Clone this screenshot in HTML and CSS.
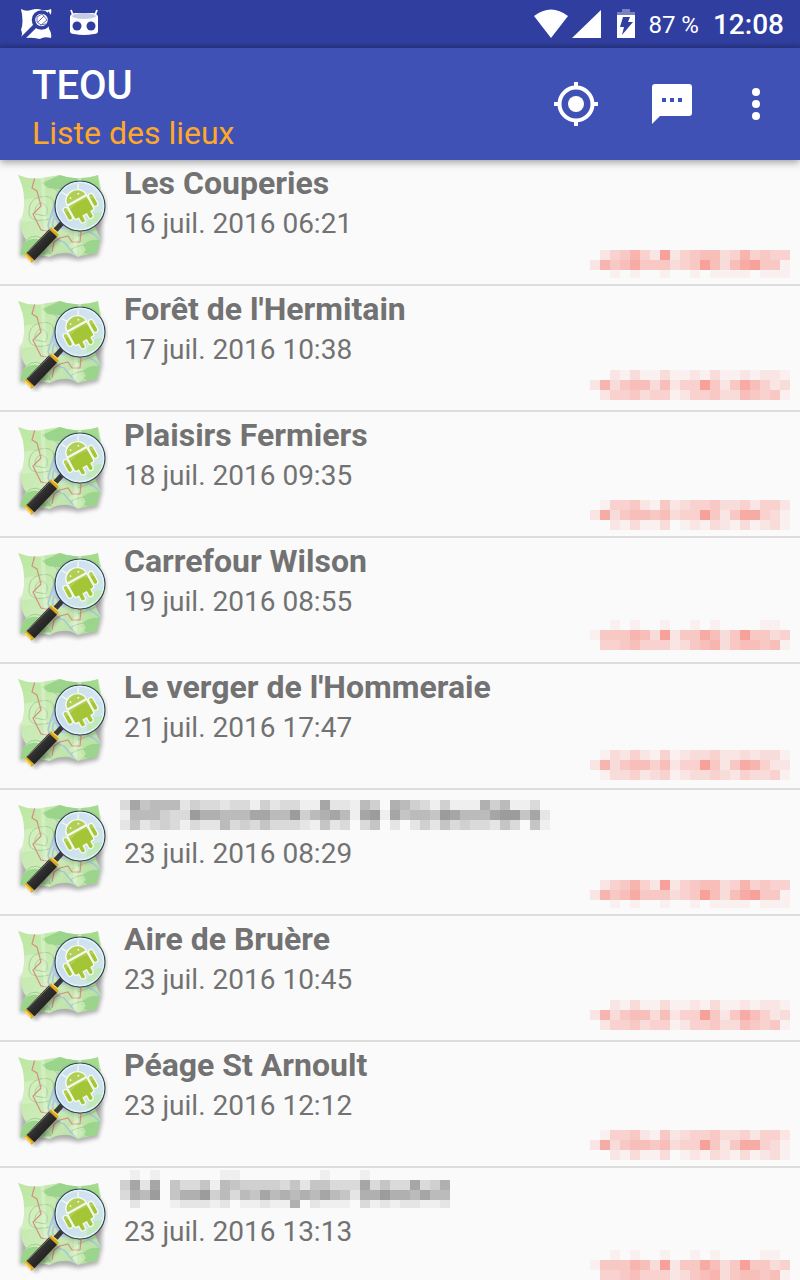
FILE: index.html
```
<!DOCTYPE html>
<html lang="fr">
<head>
<meta charset="utf-8">
<meta name="viewport" content="width=device-width, initial-scale=1">
<title>TEOU</title>
<link rel="stylesheet" href="styles.css">
</head>
<body>
<svg class="defs" aria-hidden="true">
  <defs>
    <linearGradient id="land" x1="0" y1="0" x2="1" y2="1">
      <stop offset="0" stop-color="#b9e79d"/><stop offset=".5" stop-color="#cdebba"/><stop offset="1" stop-color="#acdc96"/>
    </linearGradient>
    <linearGradient id="glass" x1="0" y1="0" x2="1" y2="1">
      <stop offset="0" stop-color="#bcd8e4"/><stop offset=".5" stop-color="#cbdff2"/><stop offset="1" stop-color="#d2eed6"/>
    </linearGradient>
    <linearGradient id="grip" x1="0" y1="0" x2="1" y2="1">
      <stop offset="0" stop-color="#555"/><stop offset=".5" stop-color="#2b2b2b"/><stop offset="1" stop-color="#151515"/>
    </linearGradient>
    <filter id="soft" x="-20%" y="-20%" width="140%" height="140%"><feGaussianBlur stdDeviation="2"/></filter>
    <clipPath id="sheet"><path d="M6 5Q18 10 30 8T48 5Q58 9 68 8Q78 8 86 5L89 18Q85 40 83 57Q86 64 89 69Q86 76 85 83Q76 84 66 87Q58 82 51 83Q44 83 38 87Q22 83 8 85Q9 76 14 70Q8 62 9 51Q13 40 12 29Q12 18 6 5Z"/></clipPath>
    <symbol id="map" viewBox="0 0 96 96">
      <path d="M9 50L8 87Q22 86 38 90Q50 85 66 90L86 86L90 70L90 48Z" fill="#000" opacity=".3" filter="url(#soft)"/>
      <g clip-path="url(#sheet)">
        <path d="M0 0H96V96H0Z" fill="url(#land)"/>
        <path d="M30 13L48 5L68 8L52 20L36 18ZM9 76Q18 66 28 70L40 84L8 86ZM68 78Q76 68 88 70L85 84L74 84Z" fill="#9ad58b"/>
        <path d="M10 30L28 27L34 50L10 52ZM56 76L66 66L74 80L66 87Z" fill="#daf2c6" opacity=".6"/>
        <path d="M68 8L86 5L89 30L78 20Z" fill="#a3dc8f"/>
        <g fill="none" stroke="#a2cf96" stroke-width="1">
          <path d="M17 44Q16 29 28 27Q41 24 42 34Q44 50 32 50Q19 52 17 44ZM23 44Q22 34 30 33Q38 36 34 46ZM44 14Q58 14 66 10M40 16Q46 24 54 22M10 76Q18 62 30 68M66 66L86 58M58 80Q70 72 86 76"/>
        </g>
        <path d="M45 20L40 46L50 60L62 56L50 40Z" fill="#bcd3ed"/>
        <path d="M44 30Q38 48 36 56Q42 70 52 72L64 86M60 60Q76 56 88 70M42 48Q38 60 46 58" fill="none" stroke="#a9c6da" stroke-width="1.6"/>
        <path d="M23 7L20 18L25 21L29 36L21 44L29 60L40 62M48 68L56 66L60 72L68 72L69 62L60 58M40 82L42 72L48 68" fill="none" stroke="#d58f83" stroke-width="1.2"/>
        <path d="M30 0L36 96M68 0L62 96" stroke="#fff" opacity=".25" stroke-width="4"/>
      </g>
      <circle cx="69" cy="38" r="26" fill="#000" opacity=".16" filter="url(#soft)"/>
      <path d="M44 66L20 91" stroke="#000" opacity=".3" stroke-width="11" filter="url(#soft)"/>
      <path d="M52 51L40 64" stroke="#383838" stroke-width="5"/>
      <path d="M43 61L16 89" stroke="#d9a722" stroke-width="10.5"/>
      <path d="M41 63L18.500 86.500" stroke="url(#grip)" stroke-width="11"/>
      <path d="M38 60L16 82" stroke="#686868" stroke-width="1"/>
      <path d="M40 58L46 63M13 85L19 91" stroke="#ffda58" stroke-width="1.5"/>
      <circle cx="68" cy="36" r="25" fill="url(#glass)" stroke="#34444c" stroke-width="1.2"/>
      <circle cx="68" cy="36" r="23.6" fill="none" stroke="#e9f6ff" stroke-width="1.2" opacity=".8"/>
      <path d="M74 57Q78 42 90 42Q88 54 74 57Z" fill="#bfe9b9"/>
      <g transform="translate(68 36) rotate(-29)" fill="#a3c536" stroke="#f5fbe9" stroke-width="1.3" stroke-linejoin="round" stroke-linecap="round">
        <path d="M-6 -15L-9 -20M6 -15L9 -20" fill="none"/>
        <path d="M-11 -7A11 10 0 0 1 11 -7Z"/>
        <rect x="-17" y="-6" width="5" height="14" rx="2.5"/>
        <rect x="12" y="-6" width="5" height="14" rx="2.5"/>
        <path d="M-11 -6H11V8Q11 10 9 10H7V15Q4 18 2 15V10H-2V15Q-4 18 -7 15V10H-9Q-11 10 -11 8Z"/>
        <path d="M-4.5 -11.5h.1M4.5 -11.5h.1" stroke-width="1.8"/>
      </g>
      <path d="M45 34A23 23 0 0 1 90 28Q70 26 60 38T45 34Z" fill="#fff" opacity=".16"/>
    </symbol>
  </defs>
</svg>

<div class="app">
  <div class="status">
    <div class="status-group">
      <svg class="status-icon" viewBox="0 0 32 32" aria-hidden="true">
        <path fill="#fff" d="M1 1Q6 4 11 2Q17 0 22 2Q27 3 31 1Q32 4 30 9Q28 16 29 21Q32 25 31 30Q24 28 20 31Q11 29 6 30L1 30Q3 25 1 22Q4 14 1 1Z"/>
        <path d="M16 17L2 31" stroke="#303f9f" stroke-width="4.500"/>
        <path d="M28 3L31 7V12L28 18Z" fill="#303f9f"/>
        <circle cx="21.500" cy="12" r="8" fill="#fff" stroke="#303f9f" stroke-width="3.500"/>
        <path d="M17 9L22 6L27 12L21 17L17 14ZM17 15L24 8M20 17L26 16" stroke="#6670b8" stroke-width="1" fill="none"/>
      </svg>
      <svg class="status-icon" viewBox="0 0 32 32" aria-hidden="true">
        <path d="M5 7L3 2M27 7L29 2" stroke="#fff" stroke-width="1.800"/>
        <path d="M2 9Q2 6 7 5H25Q30 6 30 9V23Q30 26 26 26Q16 28 6 26Q2 26 2 23Z" fill="#fff"/>
        <ellipse cx="16" cy="8" rx="12" ry="3" fill="#c5cae9"/>
        <circle cx="9" cy="18" r="4.500" fill="#303f9f"/><circle cx="23" cy="18" r="4.500" fill="#303f9f"/>
      </svg>
    </div>
    <div class="status-group status-right">
      <svg class="signals" viewBox="0 0 68 30" aria-hidden="true">
        <path fill="#fff" d="M0 7Q17 -6 34 7L17 29ZM67 1V29H38Z"/>
      </svg>
      <svg class="battery" viewBox="0 0 20 30" aria-hidden="true">
        <path fill="#7882c1" d="M6 0H14V3H19V8H1V3H6Z"/>
        <path fill="#fff" d="M1 6H19V29H1Z"/>
        <path fill="#303f9f" d="M7 8H14L12 13H17L6 26L8 18H4Z"/>
      </svg>
      <span class="percent">87 %</span>
      <time class="clock">12:08</time>
    </div>
  </div>

  <header class="toolbar">
    <div class="headings">
      <h1 class="title">TEOU</h1>
      <p class="subtitle">Liste des lieux</p>
    </div>
    <div class="actions">
      <button class="action" type="button" aria-label="Ma position">
        <svg viewBox="0 0 48 48" aria-hidden="true"><g fill="none" stroke="#fff"><circle cx="24" cy="24" r="16.500" stroke-width="4"/><path d="M24 2V8M24 40V46M2 24H8M40 24H46" stroke-width="4"/></g><circle cx="24" cy="24" r="8" fill="#fff"/></svg>
      </button>
      <button class="action" type="button" aria-label="Messages">
        <svg viewBox="0 0 48 48" aria-hidden="true"><path fill="#fff" d="M7 4H41Q44 4 44 7V33Q44 36 41 36H12L4 44V7Q4 4 7 4Z"/><path fill="#4051b5" d="M14 18h4v4h-4zM22 18h4v4h-4zM30 18h4v4h-4z"/></svg>
      </button>
      <button class="action more" type="button" aria-label="Plus d'options">
        <svg viewBox="0 0 48 48" aria-hidden="true"><g fill="#fff"><circle cx="24" cy="12" r="4"/><circle cx="24" cy="24" r="4"/><circle cx="24" cy="36" r="4"/></g></svg>
      </button>
    </div>
  </header>

  <main class="content">
    <ul class="places">
      <li class="place"><svg class="thumb" aria-hidden="true"><use href="#map"/></svg><div class="info"><h2 class="name">Les Couperies</h2><p class="date">16 juil. 2016 06:21</p><svg class="masked" data-mask="a" aria-hidden="true"></svg></div></li>
      <li class="place"><svg class="thumb" aria-hidden="true"><use href="#map"/></svg><div class="info"><h2 class="name">Forêt de l'Hermitain</h2><p class="date">17 juil. 2016 10:38</p><svg class="masked" data-mask="b" aria-hidden="true"></svg></div></li>
      <li class="place"><svg class="thumb" aria-hidden="true"><use href="#map"/></svg><div class="info"><h2 class="name">Plaisirs Fermiers</h2><p class="date">18 juil. 2016 09:35</p><svg class="masked" data-mask="c" aria-hidden="true"></svg></div></li>
      <li class="place"><svg class="thumb" aria-hidden="true"><use href="#map"/></svg><div class="info"><h2 class="name">Carrefour Wilson</h2><p class="date">19 juil. 2016 08:55</p><svg class="masked" data-mask="d" aria-hidden="true"></svg></div></li>
      <li class="place"><svg class="thumb" aria-hidden="true"><use href="#map"/></svg><div class="info"><h2 class="name">Le verger de l'Hommeraie</h2><p class="date">21 juil. 2016 17:47</p><svg class="masked" data-mask="e" aria-hidden="true"></svg></div></li>
      <li class="place"><svg class="thumb" aria-hidden="true"><use href="#map"/></svg><div class="info"><h2 class="name"><svg class="masked-name" data-mask="name1" role="img" aria-label="Nom masqué"></svg></h2><p class="date">23 juil. 2016 08:29</p><svg class="masked" data-mask="a" aria-hidden="true"></svg></div></li>
      <li class="place"><svg class="thumb" aria-hidden="true"><use href="#map"/></svg><div class="info"><h2 class="name">Aire de Bruère</h2><p class="date">23 juil. 2016 10:45</p><svg class="masked" data-mask="b" aria-hidden="true"></svg></div></li>
      <li class="place"><svg class="thumb" aria-hidden="true"><use href="#map"/></svg><div class="info"><h2 class="name">Péage St Arnoult</h2><p class="date">23 juil. 2016 12:12</p><svg class="masked" data-mask="c" aria-hidden="true"></svg></div></li>
      <li class="place"><svg class="thumb" aria-hidden="true"><use href="#map"/></svg><div class="info"><h2 class="name"><svg class="masked-name" data-mask="name2" role="img" aria-label="Nom masqué"></svg></h2><p class="date">23 juil. 2016 13:13</p><svg class="masked" data-mask="d" aria-hidden="true"></svg></div></li>
    </ul>
  </main>
</div>
<script src="masks.js"></script>
</body>
</html>
```
FILE: styles.css
```
* { box-sizing: border-box; }

body {
  margin: 0;
  font-family: Roboto, "Noto Sans", sans-serif;
  color: #727272;
  background: #fafafa;
}

h1, h2, p, ul { margin: 0; padding: 0; }

.defs { position: absolute; width: 0; height: 0; }

.app {
  display: flex;
  flex-direction: column;
  height: 100vh;
}

.status {
  display: flex;
  justify-content: space-between;
  align-items: center;
  flex: none;
  height: 48px;
  padding: 0 16px 0 20px;
  color: #fff;
  background: linear-gradient(#303f9f 42px, #2a378b);
}

.status-group { display: flex; align-items: center; gap: 16px; }
.status-right { gap: 0; }
.status-icon { width: 32px; height: 32px; }
.signals { width: 68px; height: 30px; margin-right: 14px; }
.battery { width: 20px; height: 30px; margin-right: 12px; }
.percent { padding-top: 2px; font-size: 24px; line-height: 48px; margin-right: 14px; }
.clock { padding-top: 2px; font-size: 28px; font-weight: 500; line-height: 48px; }

.toolbar {
  position: relative;
  z-index: 1;
  display: flex;
  justify-content: space-between;
  flex: none;
  height: 112px;
  padding: 0 8px 0 32px;
  color: #fff;
  background: #4051b5;
  box-shadow: 0 2px 8px rgba(0, 0, 0, .4);
}

.headings { padding-top: 12px; }
.title { font-size: 40px; font-weight: 500; line-height: 52px; }
.subtitle { font-size: 32px; line-height: 42px; color: #ffa726; }

.actions { display: flex; align-items: center; }
.action {
  display: grid;
  place-items: center;
  width: 96px;
  height: 96px;
  padding: 0;
  border: 0;
  background: none;
}
.action svg { width: 48px; height: 48px; }
.more { width: 72px; }

.content { flex: 1; min-height: 0; overflow: hidden; }
.places { list-style: none; }

.place {
  display: flex;
  gap: 16px;
  min-height: 126px;
  padding: 4px 10px 0 12px;
  border-bottom: 2px solid #dcdcdc;
}
.thumb { flex: none; width: 96px; height: 96px; margin-top: 6px; }
.info { display: flex; flex-direction: column; flex: 1; min-width: 0; }
.name { height: 40px; font-size: 32px; font-weight: 700; line-height: 38px; }
.date { font-size: 28px; line-height: 40px; }

.masked { align-self: flex-end; width: 200px; height: 38px; overflow: visible; fill: #f44336; }
.masked-name { display: block; width: 430px; height: 38px; margin-left: -4px; overflow: visible; fill: #000; }
```
FILE: masks.js
```
// Each mask is a grid of 10px blocks; a digit is the strength of its block.
const masks = {
  a: { y: 6, last: 8, rows: ["02457429245663474544", "27568555345963689551", "00101001001011110111"] },
  b: { y: 0, last: 10, rows: ["00213113112131121221", "27356636244952586423", "02445344124453365451"] },
  c: { y: 4, last: 10, rows: ["01445215234453342442", "28356656344952588431", "00213113012132131231"] },
  d: { y: -2, last: 10, rows: ["00101001001010000110", "15557639255863595534", "04456444235673566561"] },
  e: { y: 2, last: 10, rows: ["01324214123342232331", "27356646244952587422", "01334234123343243341"] },
  name1: { y: 6, last: 10, rows: [
    "3856662433233142331182216407643141117461130",
    "1666433977666886694678618918566598666899582",
    "2523431322634353332152303502024253433253051"] },
  name2: { y: -2, last: 8, rows: [
    "010100000011000000001000100000000",
    "482805335165444435255333835338347",
    "376905779463658676768652779776866",
    "020001222120112117021110312122112"] }
};

document.querySelectorAll("[data-mask]").forEach(svg => {
  const mask = masks[svg.dataset.mask];
  mask.rows.forEach((row, r) => {
    [...row].forEach((digit, c) => {
      if (digit === "0") return;
      const block = document.createElementNS("http://www.w3.org/2000/svg", "rect");
      block.setAttribute("x", c * 10);
      block.setAttribute("y", mask.y + r * 10);
      block.setAttribute("width", 10);
      block.setAttribute("height", r === mask.rows.length - 1 ? mask.last : 10);
      block.setAttribute("fill-opacity", digit * (svg.dataset.mask.startsWith("name") ? 0.042 : 0.054));
      svg.append(block);
    });
  });
});
```
